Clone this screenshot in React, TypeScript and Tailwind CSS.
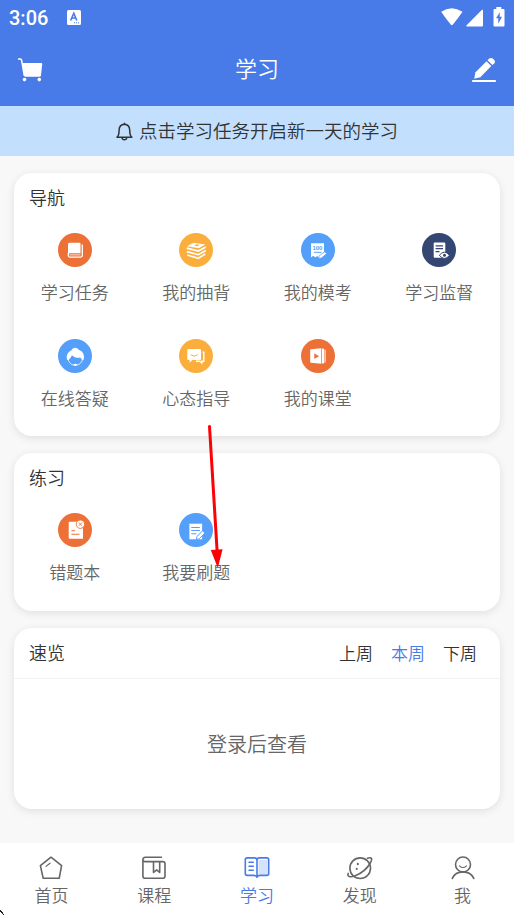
import type { ReactNode } from 'react';

const TaskIcon = () => (
  <svg width="34" height="34" viewBox="0 0 34 34" fill="none">
    <path d="M11.5 9.8H21.5Q22.5 9.8 22.5 10.8V20.3H12Q10.6 20.3 10 21V11.3Q10 9.8 11.5 9.8Z" fill="#fff" />
    <path d="M24.3 11.6V22.6Q24.3 24.1 22.8 24.1H11.8Q10.3 24.1 10.3 22.6V20" stroke="#fff" strokeWidth="1.3" />
    <path d="M11.6 21H22.5V22.6H11.6Z" fill="#f5b799" />
  </svg>
);

const BooksIcon = () => (
  <svg width="34" height="34" viewBox="0 0 34 34" fill="none">
    <path d="M8 13.2L14.4 9.7L26.3 11.4L19.8 15.3Z" fill="#fff" />
    <path d="M15.5 11.8L19 11.2L20.5 12.6L17 13.3Z" fill="#fcae3d" />
    <path d="M7.8 15.2L19.4 18L26.8 14M7.8 18.6L19.4 21.7L26.8 17.5M8.2 22L19.2 25.4L26.2 21" stroke="#fff" strokeWidth="1.7" />
  </svg>
);

const ExamIcon = () => (
  <svg width="34" height="34" viewBox="0 0 34 34" fill="none">
    <path d="M10 10.3H23V19L18 24.6L16 23L14.3 24.6L12.3 22.8L10 24.6Z" fill="#fff" />
    <text x="11.6" y="17" fill="#549ffa" fontSize="6" fontWeight="700" textLength="9.8" fontFamily="Liberation Sans, sans-serif">100</text>
    <path d="M13 19.3H20.5" stroke="#549ffa" strokeWidth="1" />
    <path d="M17.6 25.5L18.2 22.8L23.8 18.8L25.7 20.6L20.4 25Z" fill="#fff" stroke="#549ffa" strokeWidth=".7" />
  </svg>
);

const MonitorIcon = () => (
  <svg width="34" height="34" viewBox="0 0 34 34" fill="none">
    <rect x="11.7" y="9.4" width="11.6" height="15.3" rx="1" fill="#fff" />
    <path d="M13.6 12.8H21M13.6 15.6H21M13.6 18.7H17.5" stroke="#344672" strokeWidth="1.2" />
    <path d="M17.3 22.3Q22.4 16 27.5 22.3Q22.4 28.6 17.3 22.3Z" fill="#fff" stroke="#344672" strokeWidth="1" />
    <circle cx="22.5" cy="22.3" r="1.5" fill="#344672" />
  </svg>
);

const AnswerIcon = () => (
  <svg width="34" height="34" viewBox="0 0 34 34" fill="none">
    <path d="M9 20.5C7.8 16 10.4 12.6 13.6 11.2C14.2 8 19.5 7.8 20.5 10.7C25.4 12 26.9 16.8 25.5 20.8L23.8 21.2C23.8 19.3 22.7 18.2 21.5 18.8C18.3 18.9 15.6 17.8 13.8 16.2C13.7 18.2 11.5 19 10.8 21.2Z" fill="#fff" />
    <path d="M10 20C11 24.3 14 26.3 17.3 26.3C20.8 26.3 23.6 24 24.6 20.3" stroke="#fff" strokeWidth=".8" />
    <path d="M15.2 25.5Q17.3 23.8 19.4 25.5L17.3 27Z" fill="#fff" />
  </svg>
);

const ChatIcon = () => (
  <svg width="34" height="34" viewBox="0 0 34 34" fill="none">
    <path d="M9.4 10H21Q22 10 22 11V20Q22 21 21 21H13.3L10.6 23.8V21H9.4Q8.3 21 8.3 20V11Q8.3 10 9.4 10Z" fill="#fff" />
    <path d="M11.8 15.7Q15.2 18.6 18.7 15.7" stroke="#fcae3d" strokeWidth="1" />
    <path d="M23.5 13.3H24.8V22.3H22.8V24L20.7 22.3H17" stroke="#fff" strokeWidth="1.4" />
  </svg>
);

const ClassIcon = () => (
  <svg width="34" height="34" viewBox="0 0 34 34" fill="none">
    <path d="M10 10.2L20.3 9.3V24.7L10 23.8Q9.2 23.7 9.2 23V11Q9.2 10.3 10 10.2Z" fill="#fff" />
    <path d="M13.3 14.3L18 17.2L13.3 20Z" fill="#ed7036" />
    <path d="M21 9.5L23 9.8V24.2L21 24.6Z" fill="#fff" />
    <path d="M23.4 10.4L24.8 10.8V23.3L23.4 23.7Z" fill="#fbd9c9" />
  </svg>
);

const WrongIcon = () => (
  <svg width="34" height="34" viewBox="0 0 34 34" fill="none">
    <path d="M11.5 8.7H25V25.7H11.5Q10.7 25.7 10.7 24.9V9.5Q10.7 8.7 11.5 8.7Z" fill="#fff" />
    <path d="M13.4 17.8H17M13.4 21.3H21.5" stroke="#ed7036" strokeWidth="1.1" />
    <circle cx="22.4" cy="11.2" r="4.2" fill="#fff" stroke="#ed7036" strokeWidth=".9" />
    <path d="M20.8 9.6L24 12.8M24 9.6L20.8 12.8" stroke="#ed7036" strokeWidth=".9" />
  </svg>
);

const PracticeIcon = () => (
  <svg width="34" height="34" viewBox="0 0 34 34" fill="none">
    <rect x="10.4" y="10.7" width="12.7" height="15.6" fill="#fff" />
    <path d="M12.2 14.5H20.8M12.2 17.5H20.8M12.2 20.7H17.5" stroke="#549ffa" strokeWidth="1.1" />
    <path d="M17.3 26.8L18 23.3L23.6 17.8L25.8 20L20.3 25.8Z" fill="#fff" stroke="#549ffa" strokeWidth="1" />
  </svg>
);

const HomeIcon = () => (
  <svg width="26" height="26" viewBox="0 0 26 26" fill="none" stroke="currentColor" strokeWidth="1.6" strokeLinejoin="round" strokeLinecap="round">
    <path d="M13 2.2L23.6 10.7L21.2 23.3H5.2L2.4 10.7Z" />
    <path d="M8 11.4L12 8.2" strokeWidth="1.2" />
  </svg>
);

const CourseIcon = () => (
  <svg width="26" height="26" viewBox="0 0 26 26" fill="none" stroke="currentColor" strokeWidth="1.6" strokeLinejoin="round" strokeLinecap="round">
    <path d="M20.5 2.2H4.5Q1.9 2.4 1.9 4.8Q2 6.6 4 6.6H21.7Q24 6.6 24 8.7V21Q24 23.3 21.7 23.3H4.2Q1.9 23.3 1.9 21V4.8" />
    <path d="M12.5 7V17.5L15.7 14.8L18.7 17.5V7" />
  </svg>
);

const StudyIcon = () => (
  <svg width="26" height="26" viewBox="0 0 26 26" fill="none" stroke="currentColor" strokeWidth="1.6" strokeLinejoin="round" strokeLinecap="round">
    <path d="M14.5 5H23.5V19.5H14.5Z" fill="#d5e2fb" stroke="none" />
    <path d="M13 4.8Q12.5 2.9 10.5 2.9H3.2Q1.3 2.9 1.3 4.8V18.5Q1.3 20.4 3.2 20.4H9.8Q12.5 20.4 13 22.3Q13.5 20.4 16.2 20.4H22.8Q24.7 20.4 24.7 18.5V4.8Q24.7 2.9 22.8 2.9H15.5Q13.5 2.9 13 4.8V21.5" />
    <path d="M5 7.3H9.3M5 11.2H9.3M5 15.2H9.3" strokeWidth="1.5" />
  </svg>
);

const DiscoverIcon = () => (
  <svg width="26" height="26" viewBox="0 0 26 26" fill="none" stroke="currentColor" strokeWidth="1.6" strokeLinecap="round">
    <circle cx="13.2" cy="13.2" r="10.3" />
    <path d="M20.5 3.2C24.8 1.8 25.8 3.8 23.3 8C20.5 13 14.5 18.2 8.2 20.8C3.2 22.7 0 21.8 1.2 18.4" />
    <path d="M10.8 8.8V9.2M9.7 13.7V14.1" strokeWidth="2" />
  </svg>
);

const MeIcon = () => (
  <svg width="26" height="26" viewBox="0 0 26 26" fill="none" stroke="currentColor" strokeWidth="1.6" strokeLinecap="round">
    <circle cx="13" cy="9.5" r="7.5" />
    <path d="M2.3 23.4C4.2 19 8.2 16.9 13 16.9S21.8 19 23.8 23.4" />
    <path d="M9.5 10.8Q13 14.3 16.5 10.8" strokeWidth="1.1" />
  </svg>
);

interface Entry {
  label: string;
  color: string;
  icon: ReactNode;
}

const navEntries: Entry[] = [
  { label: '学习任务', color: 'bg-[#ed7036]', icon: <TaskIcon /> },
  { label: '我的抽背', color: 'bg-[#fcae3d]', icon: <BooksIcon /> },
  { label: '我的模考', color: 'bg-[#549ffa]', icon: <ExamIcon /> },
  { label: '学习监督', color: 'bg-[#344672]', icon: <MonitorIcon /> },
  { label: '在线答疑', color: 'bg-[#549ffa]', icon: <AnswerIcon /> },
  { label: '心态指导', color: 'bg-[#fcae3d]', icon: <ChatIcon /> },
  { label: '我的课堂', color: 'bg-[#ed7036]', icon: <ClassIcon /> },
];

const practiceEntries: Entry[] = [
  { label: '错题本', color: 'bg-[#ed7036]', icon: <WrongIcon /> },
  { label: '我要刷题', color: 'bg-[#549ffa]', icon: <PracticeIcon /> },
];

const tabs = [
  { label: '首页', icon: <HomeIcon /> },
  { label: '课程', icon: <CourseIcon /> },
  { label: '学习', icon: <StudyIcon />, active: true },
  { label: '发现', icon: <DiscoverIcon /> },
  { label: '我', icon: <MeIcon /> },
];

function Header() {
  return (
    <header className="h-[106px] bg-[#487ae8] text-white">
      <div className="flex h-[35px] items-center pl-[9px] pr-[9px]">
        <span className="font-['Roboto',sans-serif] text-[20px] font-medium leading-none">3:06</span>
        <svg className="ml-[19px]" width="14" height="15" viewBox="0 0 14 15">
          <rect width="14" height="15" rx="1.5" fill="#fff" />
          <path d="M3.6 10.5L6.8 3.2L9.8 10.5M4.8 8H8.8" stroke="#487ae8" strokeWidth="1.6" fill="none" />
          <path d="M7 12.8H13" stroke="#487ae8" strokeDasharray="1 1" />
        </svg>
        <svg className="mb-[2px] ml-auto" width="22" height="18" viewBox="0 0 22 18" fill="#fff">
          <path d="M.2 3.8Q10.7-3.2 21.5 3.8Q17 10.5 11.9 16.5Q10.8 18 9.7 16.5Q4.6 10.5 .2 3.8Z" />
        </svg>
        <svg className="ml-[3px]" width="18" height="18" viewBox="0 0 18 18" fill="#fff">
          <path d="M16 .8Q17 .3 17 1.5V16.5Q17 17.5 16 17.5H1.2Q-.2 17.3 .8 16Z" />
        </svg>
        <svg className="mb-[2px] ml-[9px]" width="12" height="20" viewBox="0 0 12 20">
          <path d="M3.3 0H8.3V2H10.5Q11.5 2 11.5 3V18.3Q11.5 19.5 10.5 19.5H1.5Q.5 19.5 .5 18.3V3Q.5 2 1.5 2H3.3Z" fill="#fff" />
          <path d="M6.8 5.2L3 11.2H5.3V16.8L9 9.8H6.7Z" fill="#487ae8" />
        </svg>
      </div>
      <div className="flex h-[70px] items-center justify-between pl-[17px] pr-[17px]">
        <svg width="26" height="26" viewBox="0 0 26 26" fill="#fff">
          <path d="M1 2H3.2Q4.3 2 4.6 3.2L7.3 18.5" stroke="#fff" strokeWidth="1.5" fill="none" />
          <path d="M5 6H24.3Q25.3 6 25.2 7.2L24 18.2Q23.8 19.7 22.3 19.7H8.6Q7.2 19.7 6.9 18.2Z" />
          <circle cx="7.5" cy="22.6" r="1.8" />
          <circle cx="22.3" cy="22.6" r="1.8" />
        </svg>
        <h1 className="pb-[5px] text-[22px] font-[350]">学习</h1>
        <svg width="26" height="26" viewBox="0 0 26 26" fill="#fff">
          <path d="M3.2 21.8L4.5 15.2L15.5 4.3L20.3 9L9.3 20.3Z" />
          <path d="M16.5 3.3L18.2 1.6Q20.3 .2 22.6 2.2Q25 4.5 23.2 6.4L21.4 8Z" />
          <path d="M1.2 23H24.8V25H1.2Z" />
        </svg>
      </div>
    </header>
  );
}

function Notice() {
  return (
    <div className="flex h-[50px] items-center justify-center bg-[#c2e0fd] text-[18.5px] text-[#333]">
      <svg className="mr-[6px]" width="17" height="19" viewBox="0 0 17 19" fill="none" stroke="#333" strokeWidth="1.5" strokeLinejoin="round">
        <path d="M1 15.2Q3.1 13.5 3.1 8Q3.3 2.7 8.4 2.3Q13.5 2.7 13.7 8Q13.7 13.5 15.8 15.2Z" />
        <path d="M8.4 2.3V.8M6 15.8Q6.4 17.8 8.4 17.8T10.8 15.8" />
      </svg>
      <span>点击学习任务开启新一天的学习</span>
    </div>
  );
}

function EntryGrid({ entries }: { entries: Entry[] }) {
  return (
    <div className="mt-[12px] grid grid-cols-4 gap-y-[32px]">
      {entries.map((entry) => (
        <div key={entry.label} className="flex h-[74px] flex-col items-center">
          <div className={`h-[34px] w-[34px] rounded-full ${entry.color}`}>{entry.icon}</div>
          <span className="mt-[12px] text-[17px] leading-[25px] text-[#666]">{entry.label}</span>
        </div>
      ))}
    </div>
  );
}

function Card({ className, children }: { className: string; children: ReactNode }) {
  return (
    <section className={`rounded-[18px] bg-white shadow-[0_2px_8px_rgba(0,0,0,0.1)] ${className}`}>
      {children}
    </section>
  );
}

function TabBar() {
  return (
    <nav className="grid h-[72px] grid-cols-5 bg-white">
      {tabs.map((tab) => (
        <div key={tab.label} className={`flex flex-col items-center pt-[12px] ${tab.active ? 'text-[#487ae8]' : 'text-[#666]'}`}>
          {tab.icon}
          <span className="mt-[2px] text-[17px] leading-[24px]">{tab.label}</span>
        </div>
      ))}
    </nav>
  );
}

export default function App() {
  return (
    <div className="relative flex h-[915px] w-[514px] flex-col overflow-hidden bg-[#f8f8f8] font-['Noto_Sans_CJK_SC',sans-serif] font-[350]">
      <Header />
      <Notice />
      <main className="flex flex-1 flex-col gap-[17px] px-[14px] pt-[17px]">
        <Card className="h-[263px]">
          <h2 className="h-[48px] pl-[15px] text-[18px] leading-[48px] text-[#333]">导航</h2>
          <EntryGrid entries={navEntries} />
        </Card>
        <Card className="h-[158px]">
          <h2 className="h-[48px] pl-[15px] text-[18px] leading-[48px] text-[#333]">练习</h2>
          <EntryGrid entries={practiceEntries} />
        </Card>
        <Card className="h-[181px]">
          <div className="flex h-[51px] items-center border-b border-[#f2f2f2] pb-[1px] pl-[15px] pr-[23px] text-[#333]">
            <h2 className="mr-auto text-[18px]">速览</h2>
            <div className="flex gap-[18px] text-[17px]">
              <span>上周</span>
              <span className="text-[#487ae8]">本周</span>
              <span>下周</span>
            </div>
          </div>
          <p className="flex h-[130px] items-center justify-center text-[20px] text-[#666]">登录后查看</p>
        </Card>
      </main>
      <TabBar />

      {/* pointer to the practice entry */}
      <svg className="absolute left-[200px] top-[420px]" width="30" height="152" viewBox="0 0 30 152">
        <path d="M9.5 6.5L17.3 134" stroke="#fb0207" strokeWidth="3" strokeLinecap="round" />
        <path d="M10.8 130L22.6 129.3L17.8 148Z" fill="#fb0207" />
      </svg>
      <svg className="absolute bottom-0 left-0" width="6" height="6" viewBox="0 0 6 6">
        <path d="M0 1H1V2H2V3H3V5H2V4H1V3H0ZM3 5H4V6H3Z" fill="#222" />
      </svg>
    </div>
  );
}
